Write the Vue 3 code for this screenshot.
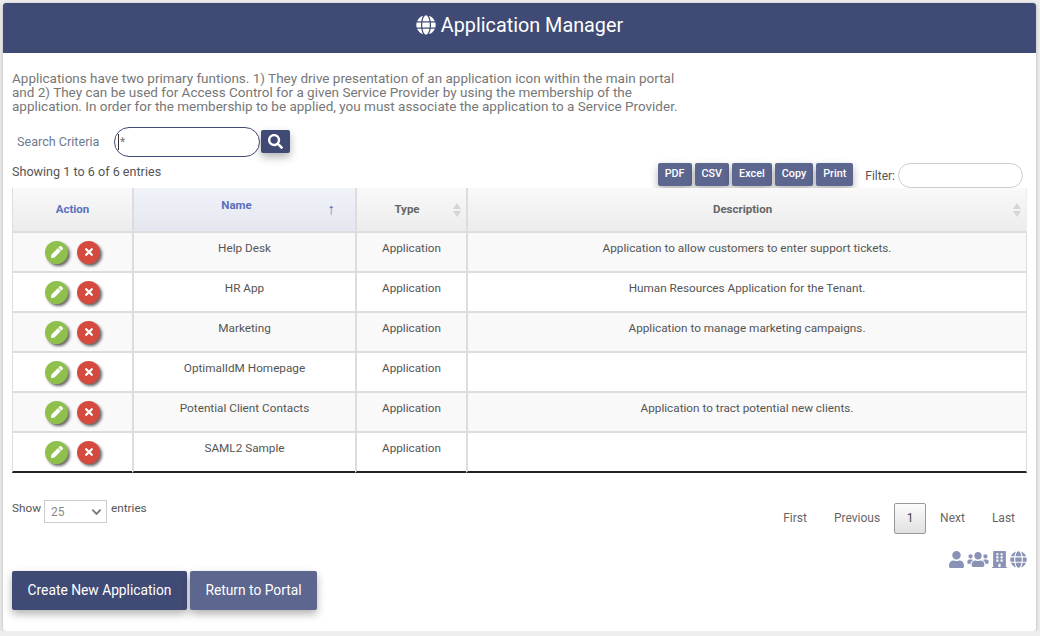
<script setup>
const icons = {
  globe: 'M336.5 160C322 70.7 287.8 8 248 8s-74 62.7-88.5 152h177zM152 256c0 22.2 1.2 43.5 3.3 64h185.3c2.1-20.5 3.3-41.8 3.3-64s-1.2-43.5-3.3-64H155.3c-2.1 20.5-3.3 41.8-3.3 64zm324.7-96c-28.6-67.9-86.5-120.4-158-141.6 24.4 33.8 41.2 84.7 50 141.6h108zM177.2 18.4C105.8 39.6 47.8 92.1 19.3 160h108c8.7-56.9 25.5-107.8 49.9-141.6zM487.4 192H372.7c2.1 21 3.3 42.5 3.3 64s-1.2 43-3.3 64h114.6c5.5-20.5 8.6-41.8 8.6-64s-3.1-43.5-8.5-64zM120 256c0-21.5 1.2-43 3.3-64H8.6C3.2 212.5 0 233.8 0 256s3.2 43.5 8.6 64h114.6c-2-21-3.2-42.5-3.2-64zm39.5 96c14.5 89.3 48.7 152 88.5 152s74-62.7 88.5-152h-177zm159.3 141.6c71.4-21.2 129.4-73.7 158-141.6h-108c-8.8 56.9-25.6 107.8-50 141.6zM19.3 352c28.6 67.9 86.5 120.4 158 141.6-24.4-33.8-41.2-84.7-50-141.6h-108z',
  search: 'M505 442.7L405.3 343c-4.5-4.5-10.6-7-17-7H372c27.6-35.3 44-79.7 44-128C416 93.1 322.9 0 208 0S0 93.1 0 208s93.1 208 208 208c48.3 0 92.7-16.4 128-44v16.3c0 6.4 2.5 12.5 7 17l99.7 99.7c9.4 9.4 24.6 9.4 33.9 0l28.3-28.3c9.4-9.4 9.4-24.6.1-34zM208 336c-70.7 0-128-57.2-128-128 0-70.7 57.2-128 128-128 70.7 0 128 57.2 128 128 0 70.7-57.2 128-128 128z',
  pencil: 'M497.9 142.1l-46.1 46.1c-4.7 4.7-12.3 4.7-17 0l-111-111c-4.7-4.7-4.7-12.3 0-17l46.1-46.1c18.7-18.7 49.1-18.7 67.9 0l60.1 60.1c18.8 18.7 18.8 49.1 0 67.9zM284.2 99.8L21.6 362.4.4 483.9c-2.9 16.4 11.4 30.6 27.8 27.8l121.5-21.3 262.6-262.6c4.7-4.7 4.7-12.3 0-17l-111-111c-4.8-4.7-12.4-4.7-17.1 0z',
  times: 'M242.72 256l100.07-100.07c12.28-12.28 12.28-32.19 0-44.48l-22.24-22.24c-12.28-12.28-32.19-12.28-44.48 0L176 189.28 75.93 89.21c-12.28-12.28-32.19-12.28-44.48 0L9.21 111.45c-12.28 12.28-12.28 32.19 0 44.48L109.28 256 9.21 356.07c-12.28 12.28-12.28 32.19 0 44.48l22.24 22.24c12.28 12.28 32.2 12.28 44.48 0L176 322.72l100.07 100.07c12.28 12.28 32.2 12.28 44.48 0l22.24-22.24c12.28-12.28 12.28-32.19 0-44.48L242.72 256z',
  user: 'M224 256c70.7 0 128-57.3 128-128S294.7 0 224 0 96 57.3 96 128s57.3 128 128 128zm89.6 32h-16.7c-22.2 10.2-46.9 16-72.9 16s-50.6-5.8-72.9-16h-16.7C60.2 288 0 348.2 0 422.4V464c0 26.5 21.5 48 48 48h352c26.5 0 48-21.5 48-48v-41.6c0-74.2-60.2-134.4-134.4-134.4z',
  users: 'M96 224c35.3 0 64-28.7 64-64s-28.7-64-64-64-64 28.7-64 64 28.7 64 64 64zm448 0c35.3 0 64-28.7 64-64s-28.7-64-64-64-64 28.7-64 64 28.7 64 64 64zm32 32h-64c-17.6 0-33.5 7.1-45.1 18.6 40.3 22.1 68.9 62 75.1 109.4h66c17.7 0 32-14.3 32-32v-32c0-35.3-28.7-64-64-64zm-256 0c61.9 0 112-50.1 112-112S381.9 32 320 32 208 82.1 208 144s50.1 112 112 112zm76.8 32h-8.3c-20.8 10-43.9 16-68.5 16s-47.6-6-68.5-16h-8.3C179.6 288 128 339.6 128 403.2V432c0 26.5 21.5 48 48 48h288c26.5 0 48-21.5 48-48v-28.8c0-63.6-51.6-115.2-115.2-115.2zm-223.7-13.4C161.5 263.1 145.6 256 128 256H64c-35.3 0-64 28.7-64 64v32c0 17.7 14.3 32 32 32h65.9c6.3-47.4 34.9-87.3 75.2-109.4z',
  building: 'M436 480h-20V24c0-13.255-10.745-24-24-24H56C42.745 0 32 10.745 32 24v456H12c-6.627 0-12 5.373-12 12v20h448v-20c0-6.627-5.373-12-12-12zM128 76c0-6.627 5.373-12 12-12h40c6.627 0 12 5.373 12 12v40c0 6.627-5.373 12-12 12h-40c-6.627 0-12-5.373-12-12V76zm0 96c0-6.627 5.373-12 12-12h40c6.627 0 12 5.373 12 12v40c0 6.627-5.373 12-12 12h-40c-6.627 0-12-5.373-12-12v-40zm52 148h-40c-6.627 0-12-5.373-12-12v-40c0-6.627 5.373-12 12-12h40c6.627 0 12 5.373 12 12v40c0 6.627-5.373 12-12 12zm76 160h-64v-84c0-6.627 5.373-12 12-12h40c6.627 0 12 5.373 12 12v84zm64-172c0 6.627-5.373 12-12 12h-40c-6.627 0-12-5.373-12-12v-40c0-6.627 5.373-12 12-12h40c6.627 0 12 5.373 12 12v40zm0-96c0 6.627-5.373 12-12 12h-40c-6.627 0-12-5.373-12-12v-40c0-6.627 5.373-12 12-12h40c6.627 0 12 5.373 12 12v40zm0-96c0 6.627-5.373 12-12 12h-40c-6.627 0-12-5.373-12-12V76c0-6.627 5.373-12 12-12h40c6.627 0 12 5.373 12 12v40z'
}

const exportButtons = ['PDF', 'CSV', 'Excel', 'Copy', 'Print']

const applications = [
  { name: 'Help Desk', description: 'Application to allow customers to enter support tickets.' },
  { name: 'HR App', description: 'Human Resources Application for the Tenant.' },
  { name: 'Marketing', description: 'Application to manage marketing campaigns.' },
  { name: 'OptimalIdM Homepage', description: '' },
  { name: 'Potential Client Contacts', description: 'Application to tract potential new clients.' },
  { name: 'SAML2 Sample', description: '' }
]

const footerIcons = [
  { path: icons.user, box: '0 0 448 512', width: 15 },
  { path: icons.users, box: '0 0 640 512', width: 22 },
  { path: icons.building, box: '0 0 448 512', width: 15 },
  { path: icons.globe, box: '0 0 496 512', width: 17 }
]
</script>

<template>
  <div class="card">
    <header class="title-bar">
      <svg class="title-icon" viewBox="0 0 496 512"><path :d="icons.globe" /></svg>
      <h1>Application Manager</h1>
    </header>

    <div class="content">
      <p class="intro">
        Applications have two primary funtions. 1) They drive presentation of an application icon within the main portal
        and 2) They can be used for Access Control for a given Service Provider by using the membership of the
        application. In order for the membership to be applied, you must associate the application to a Service Provider.
      </p>

      <div class="search-row">
        <label class="search-label">Search Criteria</label>
        <div class="search-box">
          <input class="search-input" type="text" value="*" />
          <span class="caret"></span>
        </div>
        <button class="search-btn">
          <svg viewBox="0 0 512 512"><path :d="icons.search" /></svg>
        </button>
      </div>

      <div class="table-top">
        <div class="showing">Showing 1 to 6 of 6 entries</div>
        <div class="exports">
          <button v-for="label in exportButtons" :key="label" class="export-btn">{{ label }}</button>
        </div>
        <label class="filter">Filter:</label>
        <input class="filter-input" type="text" />
      </div>

      <table class="app-table">
        <colgroup>
          <col class="col-action" />
          <col class="col-name" />
          <col class="col-type" />
          <col />
        </colgroup>
        <thead>
          <tr>
            <th class="th-link">Action</th>
            <th class="th-link th-sorted">
              <span class="name-label">Name</span>
              <span class="sort-up">↑</span>
            </th>
            <th class="th-sortable">Type<span class="sort-both"><i></i><i></i></span></th>
            <th class="th-sortable">Description<span class="sort-both"><i></i><i></i></span></th>
          </tr>
        </thead>
        <tbody>
          <tr v-for="app in applications" :key="app.name">
            <td class="cell-actions">
              <div class="actions">
                <span class="round-btn green">
                  <svg viewBox="0 0 512 512"><path :d="icons.pencil" /></svg>
                </span>
                <span class="round-btn red">
                  <svg viewBox="0 0 352 512"><path :d="icons.times" /></svg>
                </span>
              </div>
            </td>
            <td>{{ app.name }}</td>
            <td>Application</td>
            <td>{{ app.description }}</td>
          </tr>
        </tbody>
      </table>

      <div class="table-bottom">
        <div class="page-size">
          <span>Show</span>
          <div class="select-box">
            <select class="size-select">
              <option>25</option>
            </select>
            <svg class="chevron" viewBox="0 0 12 8"><path d="M1.5 1.5 6 6l4.5-4.5" /></svg>
          </div>
          <span class="entries">entries</span>
        </div>
        <nav class="pager">
          <a>First</a>
          <a>Previous</a>
          <a class="current">1</a>
          <a>Next</a>
          <a>Last</a>
        </nav>
      </div>

      <div class="scope-icons">
        <svg
          v-for="(icon, i) in footerIcons"
          :key="i"
          :viewBox="icon.box"
          :width="icon.width"
          height="17"
        ><path :d="icon.path" /></svg>
      </div>

      <div class="form-buttons">
        <button class="form-btn primary">Create New Application</button>
        <button class="form-btn secondary">Return to Portal</button>
      </div>
    </div>
  </div>
</template>

<style>
html, body {
  background: #eeeeee;
}
</style>

<style scoped>
.card {
  width: 1033px;
  height: 628px;
  margin: 3px 0 0 3px;
  background: #fff;
  border-radius: 3px;
  box-shadow: 0 1px 4px rgba(0, 0, 0, 0.25);
  font-family: Roboto, "Liberation Sans", sans-serif;
  overflow: hidden;
}

.title-bar {
  height: 50px;
  box-sizing: border-box;
  padding-bottom: 6px;
  background: #3f4a75;
  color: #fff;
  display: flex;
  align-items: center;
  justify-content: center;
  gap: 5px;
}

.title-bar h1 {
  margin: 0;
  font-size: 19.8px;
  font-weight: 400;
}

.title-icon {
  width: 20px;
  height: 20px;
  fill: #fff;
}

.content {
  padding: 0 9px;
}

.intro {
  width: 672px;
  margin: 18px 0 0;
  font-size: 13.5px;
  line-height: 14px;
  color: #777;
}

.search-row {
  display: flex;
  align-items: center;
  margin-top: 13px;
  height: 31px;
}

.search-label {
  width: 102px;
  padding-left: 5px;
  box-sizing: border-box;
  font-size: 12.6px;
  color: #6e7a8e;
}

.search-box {
  position: relative;
}

.search-input {
  display: block;
  width: 146px;
  height: 30px;
  box-sizing: border-box;
  padding: 0 0 0 5px;
  border: 1px solid #3f4a75;
  border-radius: 15px;
  outline: none;
  background: #fff;
  color: #777;
  font: 12px Roboto, sans-serif;
}

.caret {
  position: absolute;
  left: 4px;
  top: 7px;
  width: 1px;
  height: 16px;
  background: #333;
}

.search-btn {
  width: 29px;
  height: 23px;
  margin-left: 1px;
  padding: 0;
  border: 0;
  border-radius: 2px;
  background: #3f4a75;
  box-shadow: 0 4px 8px rgba(0, 0, 0, 0.3);
  display: flex;
  align-items: center;
  justify-content: center;
}

.search-btn svg {
  width: 15px;
  height: 15px;
  fill: #fff;
}

.table-top {
  display: flex;
  align-items: flex-start;
  height: 25px;
  margin-top: 6px;
}

.showing {
  flex: 1;
  font-size: 12.6px;
  line-height: 17px;
  color: #555;
}

.exports {
  display: flex;
  gap: 3px;
}

.export-btn {
  height: 23px;
  padding: 0 7px 2px;
  border: 0;
  border-radius: 2px;
  background: #5c668f;
  color: #fff;
  font: 500 10.8px Roboto, sans-serif;
  box-shadow: 0 4px 8px rgba(0, 0, 0, 0.3);
}

.filter {
  margin-left: 12px;
  font-size: 12px;
  line-height: 26px;
  color: #555;
}

.filter-input {
  width: 125px;
  height: 25px;
  margin-left: 3px;
  margin-right: 4px;
  box-sizing: border-box;
  border: 1px solid #ccc;
  border-radius: 13px;
  outline: none;
}

.app-table {
  width: 1015px;
  table-layout: fixed;
  border-collapse: separate;
  border-spacing: 0;
  font-size: 11.75px;
  color: #555;
}

.col-action {
  width: 120px;
}

.col-name {
  width: 223px;
}

.col-type {
  width: 111px;
}

.app-table th {
  position: relative;
  height: 45px;
  box-sizing: border-box;
  padding: 0 0 2px;
  background: linear-gradient(#f9f9f9, #ececec);
  border-bottom: 2px solid #ddd;
  border-left: 2px solid #ddd;
  font-size: 11.5px;
  font-weight: 700;
  color: #666;
  text-align: center;
}

.app-table th:first-child {
  border-left: 1px solid #ddd;
}

.app-table th:last-child {
  border-right: 1px solid #eee;
}

.app-table .th-sortable {
  padding-right: 9px;
}

.app-table .th-link {
  color: #5a6fc0;
}

.app-table .th-sorted {
  padding-right: 16px;
  background: linear-gradient(#f0f3f8, #e4e7ef);
}

.name-label {
  position: relative;
  top: -4px;
}

.sort-up {
  position: absolute;
  right: 20px;
  top: 12px;
  font-size: 15px;
  font-weight: 400;
}

.sort-both {
  position: absolute;
  right: 5px;
  top: 15px;
  display: flex;
  flex-direction: column;
  gap: 2px;
}

.sort-both i {
  display: block;
  width: 0;
  height: 0;
  border-left: 4px solid transparent;
  border-right: 4px solid transparent;
  border-bottom: 6px solid #d5d5d5;
}

.sort-both i:last-child {
  border-bottom: 0;
  border-top: 6px solid #d5d5d5;
}

.app-table td {
  height: 40px;
  box-sizing: border-box;
  padding: 8px 4px 0;
  background: #fff;
  border-bottom: 2px solid #ddd;
  border-left: 2px solid #ddd;
  text-align: center;
  vertical-align: top;
  line-height: 14px;
}

.app-table td:first-child {
  border-left: 1px solid #ddd;
}

.app-table td:last-child {
  border-right: 1px solid #ddd;
}

.app-table tbody tr:nth-child(odd) td {
  background: #f9f9f9;
}

.app-table tbody tr:last-child td {
  background: #fff;
  border-bottom: 2px solid #222;
}

.app-table .cell-actions {
  padding: 0;
  vertical-align: middle;
}

.actions {
  display: flex;
  justify-content: center;
  gap: 9px;
}

.round-btn {
  width: 23px;
  height: 23px;
  border-radius: 50%;
  display: flex;
  align-items: center;
  justify-content: center;
  box-shadow: 2px 2px 3px rgba(0, 0, 0, 0.6);
}

.round-btn svg {
  fill: #fff;
}

.round-btn.green {
  background: #8fbf4d;
}

.round-btn.green svg {
  width: 12px;
  height: 12px;
}

.round-btn.red {
  background: #d44a3e;
}

.round-btn.red svg {
  width: 8px;
  height: 12px;
}

.table-bottom {
  display: flex;
  justify-content: space-between;
  align-items: flex-start;
  margin-top: 27px;
}

.page-size {
  display: flex;
  align-items: flex-start;
  gap: 3px;
  font-size: 11.75px;
  line-height: 16px;
  color: #555;
}

.entries {
  margin-left: 1px;
}

.select-box {
  position: relative;
}

.size-select {
  display: block;
  width: 63px;
  height: 23px;
  padding: 0 0 0 6px;
  border: 1px solid #ccc;
  border-radius: 0;
  background: #fff;
  color: #888;
  font: 12px Roboto, sans-serif;
  appearance: none;
  outline: none;
}

.chevron {
  position: absolute;
  right: 5px;
  top: 8px;
  width: 11px;
  height: 8px;
  fill: none;
  stroke: #777;
  stroke-width: 2;
}

.pager {
  display: flex;
  align-items: center;
  gap: 1px;
  margin-top: 3px;
  margin-right: -1px;
  font-size: 12px;
  color: #666;
}

.pager a {
  padding: 0 13px;
  line-height: 31px;
}

.pager .current {
  box-sizing: border-box;
  width: 32px;
  height: 31px;
  padding: 0;
  line-height: 29px;
  text-align: center;
  border: 1px solid #999;
  border-radius: 2px;
  background: linear-gradient(#fcfcfc, #e0e0e0);
  color: #444;
}

.scope-icons {
  display: flex;
  justify-content: flex-end;
  gap: 3px;
  margin-top: 17px;
}

.scope-icons svg {
  fill: #8a92b5;
}

.form-buttons {
  display: flex;
  gap: 3px;
  margin-top: 3px;
}

.form-btn {
  height: 39px;
  padding: 0 0 2px;
  border: 0;
  border-radius: 2px;
  color: #fff;
  font: 13.8px Roboto, sans-serif;
  box-shadow: 0 4px 8px rgba(0, 0, 0, 0.3);
}

.form-btn.primary {
  width: 175px;
  background: #3f4a75;
}

.form-btn.secondary {
  width: 127px;
  background: #5c668f;
}
</style>
